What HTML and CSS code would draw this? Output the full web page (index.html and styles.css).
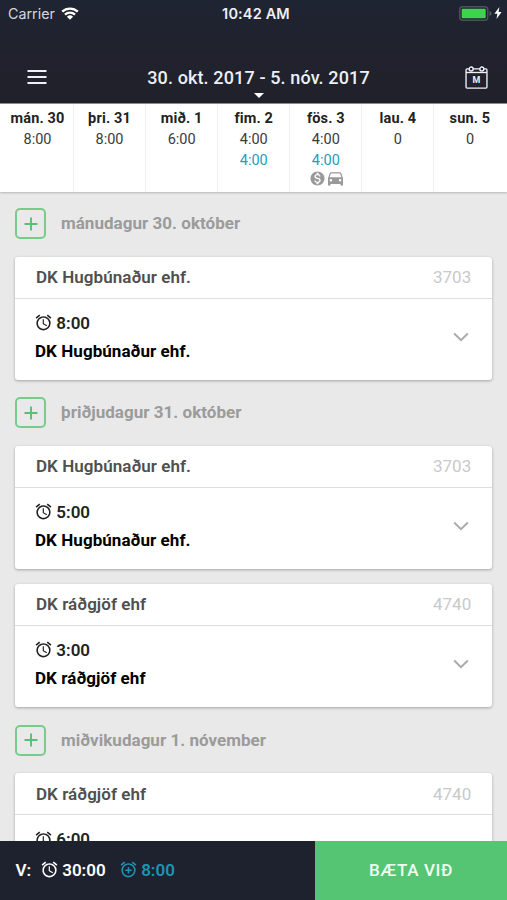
FILE: index.html
```html
<!DOCTYPE html>
<html lang="is">
<head>
<meta charset="utf-8">
<title>Tímaskráning</title>
<link rel="stylesheet" href="styles.css">
</head>
<body>
<svg class="defs" width="0" height="0" aria-hidden="true">
  <symbol id="alarm" viewBox="0 0 24 24"><path d="M22 5.720l-4.600-3.860-1.290 1.530 4.600 3.860L22 5.720zM7.880 3.390L6.600 1.860 2 5.710l1.290 1.530 4.590-3.850zM12.500 8H11v6l4.750 2.850.75-1.230-4-2.370V8zM12 4c-4.970 0-9 4.030-9 9s4.020 9 9 9a9 9 0 0 0 0-18zm0 16c-3.870 0-7-3.130-7-7s3.130-7 7-7 7 3.130 7 7-3.130 7-7 7z"/></symbol>
  <symbol id="alarm-add" viewBox="0 0 24 24"><path d="M7.880 3.390L6.600 1.860 2 5.710l1.290 1.530 4.590-3.850zM22 5.720l-4.600-3.860-1.290 1.530 4.600 3.860L22 5.720zM12 4c-4.970 0-9 4.030-9 9s4.020 9 9 9a9 9 0 0 0 0-18zm0 16c-3.870 0-7-3.130-7-7s3.130-7 7-7 7 3.130 7 7-3.130 7-7 7zm1-11h-2v3H8v2h3v3h2v-3h3v-2h-3V9z"/></symbol>
  <symbol id="chevron" viewBox="0 0 16 10"><path d="M1.200 1.500L8 8.200l6.800-6.700" fill="none" stroke="currentColor" stroke-width="2"/></symbol>
  <symbol id="plus" viewBox="0 0 14 14"><path d="M7 .5v13M.5 7h13" fill="none" stroke="currentColor" stroke-width="1.900"/></symbol>
</svg>
<div class="app">
  <header class="top">
    <div class="status">
      <div class="carrier"><span>Carrier</span>
        <svg class="wifi" viewBox="0 0 18 13"><path d="M1.200 4.700a11.200 11.200 0 0 1 15.600 0M4 7.700a7.200 7.200 0 0 1 10 0" fill="none" stroke="currentColor" stroke-width="2.300"/><path d="M9 12.800L5.900 9.700a4.500 4.500 0 0 1 6.200 0z" fill="currentColor"/></svg>
      </div>
      <div class="clock">10:42 AM</div>
      <div class="power">
        <svg class="battery" viewBox="0 0 33 15"><rect x=".75" y=".75" width="28" height="13.500" rx="3" fill="none" stroke="#4d5254" stroke-width="1.500"/><rect x="2.700" y="2.800" width="24" height="9.400" rx="1" fill="#3fd44f"/><path d="M30.500 5v5q2-.8 2-2.500t-2-2.500z" fill="#5d6068"/></svg>
        <svg class="bolt" viewBox="0 0 8 12"><path d="M5.400 0L.4 6.800h3L2.500 12l5.100-7H4.600z" fill="currentColor"/></svg>
      </div>
    </div>
    <div class="nav">
      <svg class="menu" viewBox="0 0 19 14"><path d="M0 1.100h19M0 7h19M0 12.900h19" stroke="currentColor" stroke-width="2"/></svg>
      <div class="range"><span>30. okt. 2017 - 5. nóv. 2017</span><i class="caret"></i></div>
      <svg class="calendar" viewBox="0 0 22 22"><g fill="none" stroke="currentColor" stroke-width="1.300"><rect x="1" y="2.800" width="20" height="18.300" rx="1"/><path d="M1 6.200h20"/><circle cx="5.900" cy="2.900" r="1.900" fill="#20222e"/><circle cx="16.100" cy="2.900" r="1.900" fill="#20222e"/></g><text x="11" y="16.500" text-anchor="middle" class="cal-letter">M</text></svg>
    </div>
  </header>
  <section class="week">
    <div class="day"><b>mán. 30</b><span>8:00</span></div>
    <div class="day"><b>þri. 31</b><span>8:00</span></div>
    <div class="day"><b>mið. 1</b><span>6:00</span></div>
    <div class="day"><b>fim. 2</b><span>4:00</span><span class="extra">4:00</span></div>
    <div class="day"><b>fös. 3</b><span>4:00</span><span class="extra">4:00</span>
      <div class="marks">
        <svg class="money" viewBox="0 0 24 24"><path d="M12 2a10 10 0 1 0 0 20 10 10 0 0 0 0-20zm1.410 16.090V20h-2.670v-1.930c-1.710-.36-3.160-1.460-3.270-3.400h1.960c.1 1.050.82 1.870 2.650 1.870 1.960 0 2.400-.98 2.400-1.590 0-.83-.44-1.610-2.670-2.140-2.480-.6-4.180-1.620-4.180-3.670 0-1.720 1.390-2.840 3.110-3.210V4h2.670v1.950c1.860.45 2.790 1.860 2.850 3.390H14.300c-.05-1.110-.64-1.870-2.220-1.870-1.500 0-2.400.68-2.400 1.640 0 .84.650 1.390 2.670 1.910s4.180 1.390 4.180 3.910c-.01 1.830-1.380 2.830-3.120 3.160z"/></svg>
        <svg class="car" viewBox="3 5 18 16"><path d="M18.920 6.010C18.720 5.420 18.160 5 17.500 5h-11c-.66 0-1.210.42-1.420 1.010L3 12v8c0 .55.450 1 1 1h1c.55 0 1-.45 1-1v-1h12v1c0 .55.450 1 1 1h1c.55 0 1-.45 1-1v-8l-2.080-5.990zM6.500 16a1.500 1.500 0 1 1 0-3 1.500 1.500 0 0 1 0 3zm11 0a1.500 1.500 0 1 1 0-3 1.500 1.500 0 0 1 0 3zM5 11l1.500-4.500h11L19 11H5z"/></svg>
      </div>
    </div>
    <div class="day"><b>lau. 4</b><span>0</span></div>
    <div class="day"><b>sun. 5</b><span>0</span></div>
  </section>
  <main class="list">
    <div class="heading"><div class="add"><svg><use href="#plus"/></svg></div><h2>mánudagur 30. október</h2></div>
    <article class="card">
      <div class="card-head"><span>DK Hugbúnaður ehf.</span><span class="number">3703</span></div>
      <div class="card-body"><div class="entry"><div class="time"><svg><use href="#alarm"/></svg>8:00</div><div class="client">DK Hugbúnaður ehf.</div></div><svg class="chevron"><use href="#chevron"/></svg></div>
    </article>
    <div class="heading"><div class="add"><svg><use href="#plus"/></svg></div><h2>þriðjudagur 31. október</h2></div>
    <article class="card">
      <div class="card-head"><span>DK Hugbúnaður ehf.</span><span class="number">3703</span></div>
      <div class="card-body"><div class="entry"><div class="time"><svg><use href="#alarm"/></svg>5:00</div><div class="client">DK Hugbúnaður ehf.</div></div><svg class="chevron"><use href="#chevron"/></svg></div>
    </article>
    <article class="card next">
      <div class="card-head"><span>DK ráðgjöf ehf</span><span class="number">4740</span></div>
      <div class="card-body"><div class="entry"><div class="time"><svg><use href="#alarm"/></svg>3:00</div><div class="client">DK ráðgjöf ehf</div></div><svg class="chevron"><use href="#chevron"/></svg></div>
    </article>
    <div class="heading"><div class="add"><svg><use href="#plus"/></svg></div><h2>miðvikudagur 1. nóvember</h2></div>
    <article class="card">
      <div class="card-head"><span>DK ráðgjöf ehf</span><span class="number">4740</span></div>
      <div class="card-body"><div class="entry"><div class="time"><svg><use href="#alarm"/></svg>6:00</div></div></div>
    </article>
  </main>
  <footer class="bottom">
    <div class="totals"><span class="label">V:</span><svg><use href="#alarm"/></svg><span class="sum">30:00</span><span class="overtime"><svg><use href="#alarm-add"/></svg>8:00</span></div>
    <div class="button">BÆTA VIÐ</div>
  </footer>
</div>
</body>
</html>
```
FILE: styles.css
```css
* { box-sizing: border-box; }
body { margin: 0; background: #e9e9e9; font-family: Roboto, "Liberation Sans", sans-serif; }
svg { display: block; flex: none; fill: currentColor; }
.defs { position: absolute; }
.app { width: 507px; height: 900px; display: flex; flex-direction: column; overflow: hidden; }

.top { flex: none; height: 103px; background: linear-gradient(#1f2432, #20222d 50%, #20212b); color: #eef0f6; }
.status { height: 28px; display: grid; grid-template-columns: 1fr auto 1fr; align-items: center; padding: 0 5px 2px 8px; font-family: Inter, sans-serif; }
.carrier { display: flex; align-items: center; gap: 6px; font-size: 14.300px; color: #d4d7de; }
.wifi { width: 18px; height: 13px; color: #fff; }
.clock { font-size: 14.500px; font-weight: 600; letter-spacing: .15px; padding-left: 2px; }
.power { display: flex; justify-content: flex-end; align-items: center; gap: 2px; color: #fff; }
.battery { width: 33px; height: 15px; }
.bolt { width: 8px; height: 12px; }
.nav { height: 75px; padding: 21px 19px 0 27px; display: flex; justify-content: space-between; align-items: flex-start; }
.menu { width: 20px; height: 14px; margin-top: 21px; }
.range { display: flex; flex-direction: column; align-items: center; padding: 18px 0 0 5px; font-size: 18px; line-height: 22px; font-weight: 500; letter-spacing: .13px; }
.caret { margin: 4px 0 0 2px; border: 5px solid transparent; border-top-color: #fff; border-bottom: 0; }
.calendar { width: 23px; height: 23px; margin-top: 17px; }
.cal-letter { font-size: 8.500px; font-weight: 700; }

.week { position: relative; flex: none; height: 88.500px; border-top: 1px solid #8b8a90; background: #fff; display: grid; grid-template-columns: 74px repeat(5, 72.100px) 72.500px; box-shadow: 0 1px 2px rgba(0,0,0,.22); }
.day { border-right: 1px solid #f0f0f0; display: flex; flex-direction: column; align-items: center; padding-top: 4px; font-size: 14.500px; line-height: 21px; color: #3a3a3a; }
.day:first-child { padding-left: 2px; }
.day:last-child { border-right: 0; padding-right: 1.500px; }
.day b { font-weight: 700; color: #222; letter-spacing: .15px; }
.day .extra { color: #219ec2; }
.marks { display: flex; align-items: center; gap: 2px; margin-top: -1px; color: #999; }
.money { width: 17px; height: 17px; }
.car { width: 15px; height: 14px; }

.list { flex: 1; min-height: 0; overflow: hidden; padding: 16.700px 15px 0 15.300px; }
.heading { display: flex; align-items: center; gap: 14.700px; height: 31px; }
.add { width: 31px; height: 31px; border: 2px solid #78cc8b; border-radius: 5px; color: #56c271; display: grid; place-items: center; }
.add svg { width: 14px; height: 14px; }
.heading h2 { margin: 0; padding-bottom: 1.500px; font-size: 17px; line-height: 20px; font-weight: 700; letter-spacing: .03px; color: #9b9b9b; }
.card { margin: 17.500px 0 17.800px; height: 123px; background: #fff; border-radius: 3px; box-shadow: 0 1px 3px rgba(0,0,0,.3); color: #222; }
.card:has(+ .next) { margin-bottom: 0; }
.next { margin-top: 15px; }
.card-head { height: 42px; border-bottom: 1px solid #dedede; padding: 0 20.700px; display: flex; align-items: center; justify-content: space-between; font-size: 17px; font-weight: 600; letter-spacing: .05px; color: #4f4f4f; }
.number { font-weight: 400; color: #c9c9c9; }
.card-body { height: 81px; padding: 10px 23px 0 19.700px; display: flex; justify-content: space-between; font-size: 17px; line-height: 28px; }
.time { display: flex; align-items: center; gap: 3.300px; font-weight: 600; margin-left: -1px; }
.time svg { width: 19px; height: 19px; }
.client { font-weight: 700; letter-spacing: .06px; color: #000; }
.chevron { width: 16px; height: 10px; margin-top: 23px; color: #aaa; }

.bottom { position: relative; flex: none; height: 59px; display: grid; grid-template-columns: 315px 1fr; }
.totals { background: #1e222e; color: #fff; display: flex; align-items: center; padding: 0 0 2px 15.500px; font-size: 17px; font-weight: 600; }
.totals svg { width: 19px; height: 19px; }
.label { margin-right: 8.500px; }
.sum { margin-left: 3.500px; }
.overtime { margin-left: 13px; display: flex; align-items: center; gap: 3.500px; color: #1f93b4; }
.button { background: #55c574; color: #effff0; display: grid; place-items: center; padding: 0 0 2px; font-size: 17px; font-weight: 500; letter-spacing: .65px; }
```
